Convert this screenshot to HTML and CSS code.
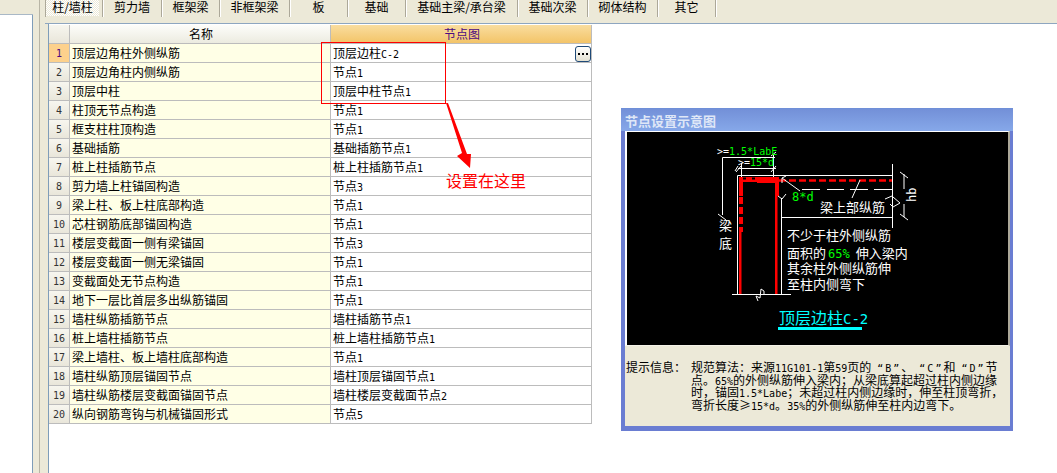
FILE: index.html
```html
<!DOCTYPE html>
<html lang="zh-CN">
<head>
<meta charset="utf-8">
<title>节点设置</title>
<link rel="stylesheet" href="styles.css">
</head>
<body>
<div class="app">
  <aside class="side">
    <div class="side-top"></div>
    <div class="side-list"></div>
  </aside>
  <div class="gutter"></div>
  <main class="main">
    <nav class="tabs">
      <div class="tab tab-on w58"><span class="tab-in">柱/墙柱</span></div>
      <div class="tab w59">剪力墙</div>
      <div class="tab w58">框架梁</div>
      <div class="tab w70">非框架梁</div>
      <div class="tab w58">板</div>
      <div class="tab w58">基础</div>
      <div class="tab w112">基础主梁/承台梁</div>
      <div class="tab w70">基础次梁</div>
      <div class="tab w70">砌体结构</div>
      <div class="tab w58">其它</div>
    </nav>
    <div class="sheet">
      <table class="grid">
        <thead>
          <tr><th class="idx"></th><th class="hname">名称</th><th class="hnode">节点图</th></tr>
        </thead>
        <tbody>
          <tr><td class="idx idx-on">1</td><td class="name">顶层边角柱外侧纵筋</td><td class="node">顶层边柱<span class="a">C-2</span><span class="more"><i></i><i></i><i></i></span></td></tr>
          <tr><td class="idx">2</td><td class="name">顶层边角柱内侧纵筋</td><td class="node">节点<span class="a">1</span></td></tr>
          <tr><td class="idx">3</td><td class="name">顶层中柱</td><td class="node">顶层中柱节点<span class="a">1</span></td></tr>
          <tr><td class="idx">4</td><td class="name">柱顶无节点构造</td><td class="node">节点<span class="a">1</span></td></tr>
          <tr><td class="idx">5</td><td class="name">框支柱柱顶构造</td><td class="node">节点<span class="a">1</span></td></tr>
          <tr><td class="idx">6</td><td class="name">基础插筋</td><td class="node">基础插筋节点<span class="a">1</span></td></tr>
          <tr><td class="idx">7</td><td class="name">桩上柱插筋节点</td><td class="node">桩上柱插筋节点<span class="a">1</span></td></tr>
          <tr><td class="idx">8</td><td class="name">剪力墙上柱锚固构造</td><td class="node">节点<span class="a">3</span></td></tr>
          <tr><td class="idx">9</td><td class="name">梁上柱、板上柱底部构造</td><td class="node">节点<span class="a">1</span></td></tr>
          <tr><td class="idx">10</td><td class="name">芯柱钢筋底部锚固构造</td><td class="node">节点<span class="a">1</span></td></tr>
          <tr><td class="idx">11</td><td class="name">楼层变截面一侧有梁锚固</td><td class="node">节点<span class="a">3</span></td></tr>
          <tr><td class="idx">12</td><td class="name">楼层变截面一侧无梁锚固</td><td class="node">节点<span class="a">1</span></td></tr>
          <tr><td class="idx">13</td><td class="name">变截面处无节点构造</td><td class="node">节点<span class="a">1</span></td></tr>
          <tr><td class="idx">14</td><td class="name">地下一层比首层多出纵筋锚固</td><td class="node">节点<span class="a">1</span></td></tr>
          <tr><td class="idx">15</td><td class="name">墙柱纵筋插筋节点</td><td class="node">墙柱插筋节点<span class="a">1</span></td></tr>
          <tr><td class="idx">16</td><td class="name">桩上墙柱插筋节点</td><td class="node">桩上墙柱插筋节点<span class="a">1</span></td></tr>
          <tr><td class="idx">17</td><td class="name">梁上墙柱、板上墙柱底部构造</td><td class="node">节点<span class="a">1</span></td></tr>
          <tr><td class="idx">18</td><td class="name">墙柱纵筋顶层锚固节点</td><td class="node">墙柱顶层锚固节点<span class="a">1</span></td></tr>
          <tr><td class="idx">19</td><td class="name">墙柱纵筋楼层变截面锚固节点</td><td class="node">墙柱楼层变截面节点<span class="a">2</span></td></tr>
          <tr><td class="idx">20</td><td class="name">纵向钢筋弯钩与机械锚固形式</td><td class="node">节点<span class="a">5</span></td></tr>
        </tbody>
      </table>
    </div>
  </main>
</div>

<div class="mark-box"></div>
<svg class="mark-arrow" width="40" height="70" viewBox="0 0 40 70">
  <polygon class="red" points="0,0 2,0 21,51 25,51 24,65 11,53 16,50"/>
</svg>
<div class="mark-text">设置在这里</div>

<section class="dialog">
  <header class="dialog-title">节点设置示意图</header>
  <div class="frame">
    <svg class="draw" width="381" height="213" viewBox="627 132 381 213">
      <!-- outlines -->
      <path class="w" d="M722.5 215V157.5H775M741.5 180V163M738 168.5H776M773.5 155V178"/>
      <path class="w" d="M737.5 294V175.5H892.5M781.5 294V198M781.5 217.5H892.5M892.5 164V228"/>
      <path class="w" d="M732 294.5H791"/>
      <path class="w" d="M758 301L756 296L760 298L761 289L764 291L764 294"/>
      <path class="w" d="M718 214L726 220M735 171L738 166M771 172L776 166M736 172L741 166M771 156L776 152"/>
      <!-- rebar -->
      <rect class="red" x="739" y="177" width="40" height="5"/>
      <rect class="red" x="739" y="177" width="4" height="19"/>
      <rect class="red" x="775" y="177" width="4" height="19"/>
      <path class="rdash" d="M741 197V232"/>
      <rect class="red" x="739" y="232" width="2.5" height="62"/>
      <rect class="red" x="775" y="196" width="2.5" height="98"/>
      <path class="kdash" d="M743 178.5H758"/>
      <rect class="red" x="757" y="180" width="18" height="3"/>
      <path class="rbar" d="M779 180.5H892"/>
      <!-- beam dims -->
      <path class="w" d="M802 189.500H820M827 189.500H844M850 189.500H868M874 189.500H892"/>
      <path class="w" d="M860 180L852 198M782 178L800 191M782 178L786 176M782 178L782 183"/>
      <path class="w" d="M778 196L782 199M782 199L786 194"/>
      <path class="w" d="M885 199L892 196L893 197L900 203L893 207L890 204"/>
      <path class="w" d="M904 174V189M904 204V217M900 172L908 178M900 214L908 220"/>
      <!-- labels -->
      <text class="t-m" x="717" y="155"><tspan class="t-w">&gt;=</tspan><tspan class="t-g">1.5*LabE</tspan></text>
      <text class="t-m" x="738" y="166"><tspan class="t-w">&gt;=</tspan><tspan class="t-g">15*d</tspan></text>
      <text class="t-8d" x="792" y="201">8*d</text>
      <text class="t-c" x="820" y="212">梁上部纵筋</text>
      <text class="t-c" x="719" y="230">梁</text>
      <text class="t-c" x="719" y="248">底</text>
      <text class="t-r" transform="translate(916 202) rotate(-90)">hb</text>
      <text class="t-c" x="787" y="240">不少于柱外侧纵筋</text>
      <text class="t-c" x="787" y="258">面积的<tspan class="t-g2" dx="2">65%</tspan><tspan dx="6">伸入梁内</tspan></text>
      <text class="t-c" x="787" y="273">其余柱外侧纵筋伸</text>
      <text class="t-c" x="787" y="289">至柱内侧弯下</text>
      <text class="t-title" x="779" y="324">顶层边柱<tspan class="t-title-l">C-2</tspan></text>
      <rect class="cy" x="778" y="327" width="84" height="3"/>
    </svg>
  </div>
  <div class="info">
    <div class="info-label">提示信息：</div>
    <div class="info-body">
      <div class="ln">规范算法：来源<span class="a">11G101-1</span>第<span class="a">59</span>页的<span class="gap"></span><span class="a q">“B”</span>、<span class="gap"></span><span class="a q">“C”</span>和<span class="gap"></span><span class="a q">“D”</span>节</div>
      <div class="ln">点。<span class="a">65%</span>的外侧纵筋伸入梁内；从梁底算起超过柱内侧边缘</div>
      <div class="ln">时，锚固<span class="a">1.5*Labe</span>；未超过柱内侧边缘时，伸至柱顶弯折，</div>
      <div class="ln">弯折长度≥<span class="a">15*d</span>。<span class="a">35%</span>的外侧纵筋伸至柱内边弯下。</div>
    </div>
  </div>
</section>
</body>
</html>
```
FILE: styles.css
```css
* { box-sizing: border-box; }
html, body { margin: 0; height: 100%; }
body {
  width: 1057px;
  height: 473px;
  overflow: hidden;
  background: #fff;
  color: #000;
  font: 12px/1 "Noto Sans CJK SC", "Liberation Sans", sans-serif;
}
.a { font-family: "DejaVu Sans Mono", monospace; font-size: 10px; line-height: 0; }

.app { display: flex; height: 473px; }
.side { width: 33px; display: flex; flex-direction: column; }
.side-top { height: 15px; background: #ece9d8; border-bottom: 1px solid #a9b8c6; }
.side-list { flex: 1; background: #fff; border-right: 1px solid #7f9db9; }
.gutter {
  width: 15px;
  background: #ece9d8;
  background-image: linear-gradient(#b8b5a6, #b8b5a6);
  background-size: 1px 100%;
  background-position: 6px 0;
  background-repeat: no-repeat;
  flex: none;
}
.main { flex: 1; display: flex; flex-direction: column; min-width: 0; position: relative; }

/* tabs */
.tabs {
  display: flex;
  height: 24px;
  margin-left: -3px;
  padding-bottom: 6px;
  background: #ece9d8;
  border-bottom: 1px solid #8ea6c0;
}
.tab {
  height: 17px;
  display: flex;
  align-items: center;
  justify-content: center;
  padding-bottom: 3px;
  border-right: 1px solid #aca899;
  box-shadow: 1px 0 0 #fff;
  white-space: nowrap;
}
.tabs .tab:first-child { border-left: 1px solid #aca899; }
.tab-on { padding: 0 3px 1px 0; align-items: stretch; }
.tab-in {
  flex: 1;
  display: flex;
  align-items: center;
  justify-content: center;
  padding-bottom: 2px;
  background: repeating-conic-gradient(#fff 0 25%, #ece9d8 0 50%) 0 0 / 2px 2px;
}
.w58 { width: 58px; }
.w59 { width: 59px; }
.w70 { width: 70px; }
.w112 { width: 112px; }

/* sheet */
.sheet { flex: 1; padding: 1px 0 0 0; border-left: 1px solid #7f9db9; background: #fff; }
.grid {
  width: 543px;
  table-layout: fixed;
  border-collapse: separate;
  border-spacing: 0;
}
.grid th, .grid td {
  height: 19px;
  padding: 0 0 1px 2px;
  border-right: 1px solid #bcbcbc;
  border-bottom: 1px solid #bcbcbc;
  font-weight: 400;
  text-align: left;
  white-space: nowrap;
  line-height: 17px;
}
.grid .idx {
  width: 21px;
  padding: 0;
  text-align: center;
  color: #333;
  font-family: "DejaVu Sans Mono", monospace;
  font-size: 10px;
  background: linear-gradient(#f7f6ef, #e9e6da);
}
.grid .idx-on { background: #fdd18c; color: #4b0a82; }
.grid .hname {
  width: 261px;
  text-align: center;
  background: linear-gradient(#fdfdfa, #ecebe0);
}
.grid .hnode {
  width: 261px;
  text-align: center;
  color: #4b0a82;
  background: linear-gradient(#f9dd9f, #f3c468);
}
.grid .name { background: #ffffe6; }
.grid .node { position: relative; background: #fff; }
.more {
  position: absolute;
  right: 0;
  top: 2px;
  width: 16px;
  height: 16px;
  display: flex;
  align-items: center;
  justify-content: center;
  gap: 2px;
  border: 1px solid #1f4a78;
  border-radius: 3px;
  background: linear-gradient(#fff, #e4e1d2);
}
.more i { width: 2px; height: 2px; background: #000; }

/* annotation */
.mark-box {
  position: absolute;
  left: 321px;
  top: 42px;
  width: 125px;
  height: 62px;
  border: 1px solid #f00;
}
.mark-arrow { position: absolute; left: 446px; top: 103px; }
.red { fill: #f00; }
.mark-text {
  position: absolute;
  left: 446px;
  top: 171px;
  color: #f00;
  font-size: 16px;
  line-height: 18px;
}

/* dialog */
.dialog {
  position: absolute;
  left: 621px;
  top: 108px;
  width: 392px;
  height: 323px;
  display: flex;
  flex-direction: column;
  background: #6a7dd2;
  padding: 0 3px 5px 4px;
  border-top: 1px solid #6f8fd8;
}
.dialog-title {
  height: 22px;
  margin: 0 -3px 0 -4px;
  padding: 4px 0 0 4px;
  color: #dfe7f7;
  font-size: 13px;
  line-height: 15px;
  font-weight: 700;
  background: linear-gradient(#7390d8, #86a8e9);
}
.frame {
  flex: none;
  border-top: 1px solid #fff;
  border-left: 2px solid #fff;
  border-right: 2px solid #aca899;
  border-bottom: 1px solid #f4f2e8;
  line-height: 0;
}
.draw { display: block; background: #000; }
.info {
  flex: 1;
  display: flex;
  padding: 15px 0 0 1px;
  background: #ece9d8;
  line-height: 12.5px;
}
.info-label { width: 65px; flex: none; }
.ln { white-space: nowrap; height: 12.500px; }
.gap { display: inline-block; width: 6px; }
.q { letter-spacing: 2px; }

/* drawing strokes */
.w { fill: none; stroke: #fff; stroke-width: 1; }
.rdash { fill: none; stroke: #f00; stroke-width: 4; stroke-dasharray: 7 3; }
.kdash { fill: none; stroke: #000; stroke-width: 2; stroke-dasharray: 3 6; }
.rbar { fill: none; stroke: #f00; stroke-width: 2.5; stroke-dasharray: 7 3; }
.cy { fill: #0ff; }
.t-m { font-family: "DejaVu Sans Mono", monospace; font-size: 10px; }
.t-w { fill: #fff; }
.t-g { fill: #0f0; }
.t-g2 { fill: #0f0; font-family: "DejaVu Sans Mono", monospace; font-size: 12px; }
.t-8d { fill: #0f0; font-family: "DejaVu Sans Mono", monospace; font-size: 12px; }
.t-c { fill: #fff; font-size: 13px; }
.t-r { fill: #fff; font-family: "DejaVu Sans Mono", monospace; font-size: 12px; }
.t-title { fill: #0ff; font-size: 16px; }
.t-title-l { font-family: "DejaVu Sans Mono", monospace; font-size: 14px; }
```
